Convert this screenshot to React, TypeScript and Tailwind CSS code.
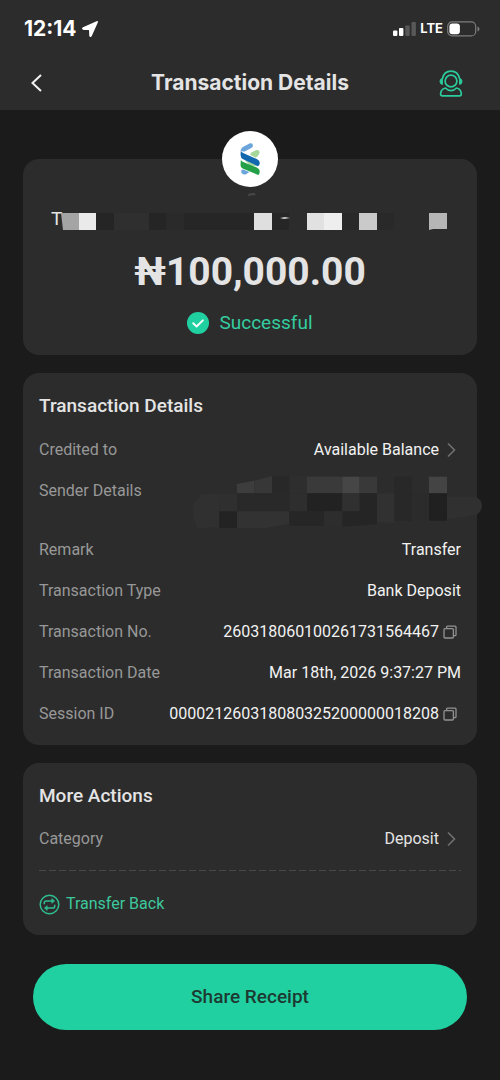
import React from 'react';

const MaskedName = () => (
  <svg className="h-10 w-[410px]" viewBox="0 0 410 40" aria-hidden="true">
    <path d="M187 1l6-2 2 3-8 1z" fill="#444" />
    <rect x="0" y="20" width="18" height="17" fill="#a4a4a4" />
    <path d="M0 20l2 17H0z" fill="#2c2c2c" />
    <rect x="18" y="20" width="17" height="17" fill="#eaeaea" />
    <rect x="35" y="20" width="18" height="17" fill="#252525" />
    <rect x="53" y="20" width="35" height="17" fill="#2f2f2f" />
    <rect x="88" y="20" width="17" height="17" fill="#252525" />
    <rect x="105" y="20" width="18" height="17" fill="#2a2a2a" />
    <rect x="123" y="20" width="70" height="17" fill="#262626" />
    <rect x="193" y="20" width="18" height="17" fill="#dfdfdf" />
    <rect x="211" y="20" width="17" height="17" fill="#262626" />
    <path d="M219 25l5-1 5 1-6 1z" fill="#d0d0d0" />
    <rect x="246" y="20" width="17" height="17" fill="#e1e1e1" />
    <rect x="263" y="20" width="18" height="17" fill="#eee" />
    <rect x="281" y="20" width="17" height="17" fill="#292929" />
    <rect x="298" y="20" width="18" height="17" fill="#cacaca" />
    <rect x="316" y="20" width="17" height="17" fill="#292929" />
    <rect x="368" y="20" width="18" height="17" fill="#b6b6b6" />
    <path d="M368 37l4-1h14v1z" fill="#2c2c2c" />
  </svg>
);

const MaskedSender = () => (
  <svg className="h-[54px] w-[290px]" viewBox="0 0 870 162" aria-hidden="true">
    <path d="M26 62Q0 70 0 100t12 55h30V62z" fill="#303030" />
    <path d="M760 62h70q37 0 37 27t-37 32l-68 8z" fill="#303030" />
    <rect x="24" y="54" width="55" height="100" fill="#303030" />
    <rect x="79" y="54" width="53" height="54" fill="#2f2f2f" />
    <path d="M132 24l52-10v38h-52z" fill="#3d3d3d" />
    <path d="M184 14l53-14v52h-53z" fill="#373737" />
    <rect x="237" y="0" width="52" height="52" fill="#282828" />
    <rect x="289" y="0" width="53" height="52" fill="#2e2e2e" />
    <rect x="342" y="2" width="106" height="50" fill="#3a3a3a" />
    <rect x="448" y="2" width="52" height="50" fill="#464646" />
    <rect x="500" y="2" width="52" height="50" fill="#393939" />
    <rect x="604" y="2" width="52" height="132" fill="#282828" />
    <rect x="708" y="2" width="54" height="50" fill="#444" />
    <rect x="132" y="52" width="157" height="54" fill="#292929" />
    <rect x="289" y="52" width="53" height="54" fill="#2e2e2e" />
    <rect x="342" y="52" width="106" height="54" fill="#222" />
    <rect x="448" y="52" width="52" height="54" fill="#303030" />
    <path d="M500 52h52v92l-104 8v-46h52z" fill="#252525" />
    <rect x="552" y="52" width="52" height="88" fill="#313131" />
    <rect x="656" y="52" width="52" height="80" fill="#2b2b2b" />
    <rect x="708" y="52" width="54" height="82" fill="#202020" />
    <rect x="79" y="106" width="53" height="50" fill="#232323" />
    <path d="M132 106h157v38l-70 12h-87z" fill="#323232" />
    <rect x="289" y="106" width="104" height="44" fill="#262626" />
    <rect x="393" y="106" width="55" height="44" fill="#2d2d2d" />
  </svg>
);

const BankLogo = () => (
  <svg className="h-8 w-5" viewBox="0 0 60 98" fill="none" aria-hidden="true">
    <path d="M2 24q-1-8 6-12L30 1q8-2 9 6 0 6-5 8L12 27z" fill="#6ba5dc" />
    <path d="M34 29l14-7q9-3 11 4 1 8-5 14l-6 5-18-9z" fill="#a5d69a" />
    <path d="M14 52l14-6 30 14-8 9-16 5z" fill="#a9d8a0" />
    <path d="M2 22q1 6 7 9l42 18q9 4 9 12 0 7-6 10L9 50Q1 46 1 36z" fill="#1268ae" />
    <path d="M2 51q1 4 7 7l42 17q9 4 9 12 0 7-5 11L9 79Q1 76 1 66z" fill="#24a148" />
    <path d="M5 82l4-1 19 8-9 6q-9 4-14-2-4-6 0-11z" fill="#6ba5dc" />
  </svg>
);

const Chevron = () => (
  <svg className="h-4 w-[9px]" viewBox="0 0 9 16" fill="none" stroke="#707070" strokeWidth="1.6" aria-hidden="true">
    <path d="M1 1.5l6.5 6.5L1 14.5" />
  </svg>
);

const CopyIcon = () => (
  <svg className="h-[14px] w-[14px]" viewBox="0 0 14 14" fill="none" stroke="#929292" strokeWidth="1.3" aria-hidden="true">
    <rect x="1" y="3.6" width="9.4" height="9.4" rx="1" />
    <path d="M3.6 3.4V2q0-.9.9-.9h7.6q.9 0 .9.9v7.8q0 .9-.9.9h-1.5" />
  </svg>
);

interface RowProps {
  label: string;
  children: React.ReactNode;
}

const Row = ({ label, children }: RowProps) => (
  <div className="flex h-[41px] items-center justify-between">
    <dt className="text-[#989898]">{label}</dt>
    <dd className="flex items-center text-[#f2f2f2]">{children}</dd>
  </div>
);

const CopyRow = ({ label, value }: { label: string; value: string }) => (
  <Row label={label}>
    {value}
    <button className="mx-1" aria-label={`Copy ${label}`}>
      <CopyIcon />
    </button>
  </Row>
);

const Header = () => (
  <header className="h-[110px] bg-[#2c2c2c] px-6 font-['Inter',sans-serif] text-white">
    {/* Status bar */}
    <div className="flex h-[58px] items-center justify-between">
      <div className="flex items-center gap-1">
        <span className="text-[21px] font-bold">12:14</span>
        <svg className="h-[18px] w-[18px]" viewBox="0 0 18 18" fill="#fff" aria-hidden="true">
          <path d="M15.6 1.2L2 7.2Q.5 8 1.2 9t2 1l4.3.1q.6 0 .6.6l.1 4.5q.1 1.5 1 1.8t1.7-1.2l5.9-13.2q.9-2.2-1.2-1.4z" />
        </svg>
      </div>
      <div className="-mr-1 flex items-center gap-1">
        <svg className="h-[14px] w-[23px]" viewBox="0 0 23 14" aria-hidden="true">
          <rect x="0" y="8.5" width="4.4" height="5.5" rx="1" fill="#fff" />
          <rect x="6" y="6" width="4.4" height="8" rx="1" fill="#fff" />
          <rect x="12.3" y="3.5" width="4.4" height="10.5" rx="1" fill="#585858" />
          <rect x="18.5" y="0" width="4.4" height="14" rx="1" fill="#585858" />
        </svg>
        <span className="text-[13px] font-bold">LTE</span>
        <svg className="h-4 w-[33px]" viewBox="0 0 33 16" fill="none" aria-hidden="true">
          <rect x=".7" y=".9" width="28" height="14" rx="4.5" stroke="#7c7c7c" strokeWidth="1.2" />
          <rect x="2.4" y="2.6" width="10.5" height="10.6" rx="3" fill="#fff" />
          <path d="M30.5 5.5q2 .8 2 2.5t-2 2.5z" fill="#7c7c7c" />
        </svg>
      </div>
    </div>

    {/* Title bar */}
    <div className="flex h-[50px] items-center justify-between">
      <button className="w-[54px] pl-[7px]" aria-label="Back">
        <svg className="h-[18px] w-[11px]" viewBox="0 0 11 18" fill="none" stroke="#f2f2f2" strokeWidth="2" aria-hidden="true">
          <path d="M10 1L1.5 9l8.5 8" />
        </svg>
      </button>
      <h1 className="text-[21px] font-bold text-[#e4e4e4]">Transaction Details</h1>
      <button className="flex w-[54px] justify-end pr-[13px]" aria-label="Customer support">
        <svg className="h-[27px] w-6" viewBox="0 0 24 27" fill="none" stroke="#2bcc9c" strokeWidth="1.7" strokeLinejoin="round" aria-hidden="true">
          <circle cx="12" cy="11" r="5.9" />
          <path d="M3.3 9Q5 1.2 12 1.2T20.7 9" />
          <path d="M3.4 8.4q-2.4.4-2.4 3t2.4 3zM20.6 8.4q2.4.4 2.4 3t-2.4 3z" fill="#2bcc9c" strokeWidth="1" />
          <path d="M6.5 18q2.3 2.6 5.5 2.6t5.5-2.6q2.7.4 3.9 2.6.9 1.7.9 3.5 0 1.7-1.7 1.7H3.3q-1.7 0-1.7-1.7 0-1.8.9-3.5Q3.8 18.4 6.5 18z" />
        </svg>
      </button>
    </div>
  </header>
);

const App = () => {
  return (
    <div className="min-h-screen bg-[#1b1b1b] font-['Roboto',sans-serif] text-base">
      <Header />

      <main className="flex flex-col gap-[18px] px-[23px] pt-[49px] pb-[50px]">
        {/* Amount */}
        <section className="relative flex h-[196px] flex-col items-center rounded-2xl bg-[#2c2c2c] pt-[33px]">
          <div className="absolute -top-7 flex h-14 w-14 items-center justify-center rounded-full bg-white">
            <BankLogo />
          </div>
          <div className="flex w-full items-center overflow-hidden pl-7 text-[19px] text-[#e4e4e4]">
            <span className="w-[10px] pt-[13px]">T</span>
            <div className="shrink-0">
              <MaskedName />
            </div>
          </div>
          <p className="mt-3 text-[39px] leading-[52px] font-bold text-[#e4e4e4]">₦100,000.00</p>
          <div className="mt-[11px] flex items-center gap-[10px]">
            <svg className="h-[22px] w-[22px]" viewBox="0 0 22 22" fill="none" aria-hidden="true">
              <circle cx="11" cy="11" r="11" fill="#21d0a1" />
              <path d="M6.2 11.2l3.4 3.3 6.2-6.2" stroke="#fff" strokeWidth="1.9" strokeLinecap="round" strokeLinejoin="round" />
            </svg>
            <span className="text-[19px] text-[#35cda0]">Successful</span>
          </div>
        </section>

        {/* Details */}
        <section className="rounded-2xl bg-[#2c2c2c] px-4 pt-[19px] pb-[11px]">
          <h2 className="text-[19px] leading-7 font-medium text-[#e4e4e4]">Transaction Details</h2>
          <dl className="mt-[9px]">
            <Row label="Credited to">
              <button className="flex items-center gap-2 pr-[5px]">
                Available Balance
                <Chevron />
              </button>
            </Row>
            <div className="flex h-[59px] justify-between">
              <dt className="pt-[9px] text-[#989898]">Sender Details</dt>
              <dd className="-mr-[22px] pt-[6px]">
                <MaskedSender />
              </dd>
            </div>
            <Row label="Remark">Transfer</Row>
            <Row label="Transaction Type">Bank Deposit</Row>
            <CopyRow label="Transaction No." value="260318060100261731564467" />
            <Row label="Transaction Date">Mar 18th, 2026 9:37:27 PM</Row>
            <CopyRow label="Session ID" value="000021260318080325200000018208" />
          </dl>
        </section>

        {/* Actions */}
        <section className="rounded-2xl bg-[#2c2c2c] px-4 pt-[19px] pb-[19px]">
          <h2 className="text-[19px] leading-7 font-medium text-[#e4e4e4]">More Actions</h2>
          <dl className="mt-2">
            <Row label="Category">
              <button className="flex items-center gap-2 pr-[5px] text-[#e4e4e4]">
                Deposit
                <Chevron />
              </button>
            </Row>
          </dl>
          <svg className="mt-[11px] block h-px w-full" aria-hidden="true">
            <path d="M0 .5h2000" stroke="#484848" strokeDasharray="7 3" />
          </svg>
          <button className="mt-[21px] flex items-center gap-[6px] text-[#3dc79d]">
            <svg className="h-[21px] w-[21px]" viewBox="0 0 21 21" fill="none" stroke="#2fbd90" strokeWidth="1.5" aria-hidden="true">
              <circle cx="10.5" cy="10.5" r="9.3" />
              <path d="M5.3 10.3V8.8q0-1.8 1.8-1.8h7.5M15.7 10.7v1.5q0 1.8-1.8 1.8H6.4" />
              <path d="M12.8 4.5L15.6 7l-2.8 2.3zM8.2 11.7L5.4 14l2.8 2.5z" fill="#2fbd90" strokeWidth=".6" />
            </svg>
            Transfer Back
          </button>
        </section>

        <button className="mx-[10px] mt-[11px] h-[66px] rounded-full bg-[#21d0a1] text-[19px] font-medium text-[#1d3a32]">
          Share Receipt
        </button>
      </main>
    </div>
  );
};

export default App;
